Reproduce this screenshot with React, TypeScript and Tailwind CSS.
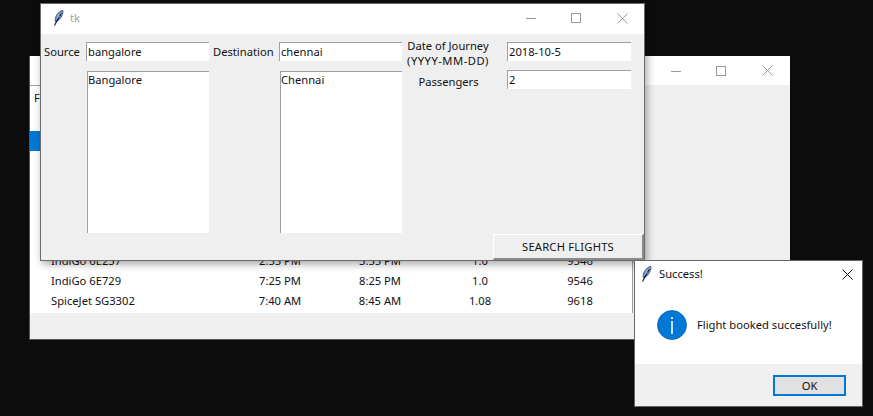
const font = { fontFamily: '"Noto Sans", "Open Sans", sans-serif' };

function Feather() {
  return (
    <svg width="11" height="16" viewBox="0 0 11 16">
      <path d="M9.8 0.3 C6.6 1 3 4.5 2.4 8.5 L2.2 11.5 C4.8 11.5 7.6 8.6 8.9 5.8 C9.8 3.8 10.2 1.8 9.8 0.3 Z" fill="#6f9fe0" stroke="#1c2b45" strokeWidth="0.7" />
      <path d="M8.3 3 L1.5 15.5" stroke="#0b0f1a" strokeWidth="1.1" fill="none" />
      <path d="M7.6 3.2 L4.8 5.6 M6.8 6.2 L4.2 7.8" stroke="#dbe9f9" strokeWidth="0.7" fill="none" />
    </svg>
  );
}

function WinControls({ color = '#999999' }: { color?: string }) {
  return (
    <div className="flex items-center">
      <svg width="10" height="10" viewBox="0 0 10 10" className="mr-[35px]">
        <path d="M0 5.5 H10" stroke={color} fill="none" />
      </svg>
      <svg width="10" height="10" viewBox="0 0 10 10" className="mr-[36px]">
        <rect x="0.5" y="0.5" width="9" height="9" stroke={color} fill="none" />
      </svg>
      <svg width="11" height="11" viewBox="0 0 11 11">
        <path d="M0.5 0.5 L10.5 10.5 M10.5 0.5 L0.5 10.5" stroke={color} fill="none" />
      </svg>
    </div>
  );
}

function Entry({ value, className }: { value: string; className: string }) {
  return (
    <div className={`h-[19px] bg-white border-t border-l border-[#a0a0a0] pl-[1px] leading-[17px] text-[11.2px] text-[#111] ${className}`}>
      {value}
    </div>
  );
}

function ListBox({ value, className }: { value: string; className: string }) {
  return (
    <div className={`h-[162px] bg-white border-t border-l border-[#a0a0a0] leading-[16px] text-[11.2px] text-[#111] ${className}`}>
      {value}
    </div>
  );
}

const flights = [
  ['IndiGo 6E237', '2:55 PM', '3:55 PM', '1.0', '9546'],
  ['IndiGo 6E729', '7:25 PM', '8:25 PM', '1.0', '9546'],
  ['SpiceJet SG3302', '7:40 AM', '8:45 AM', '1.08', '9618'],
];

function BackWindow() {
  return (
    <div className="absolute left-[29px] top-[56px] w-[761px] h-[284px] bg-[#f0f0f0] border-l border-b border-[#555] flex flex-col text-[11.2px]">
      <div className="h-[29px] bg-white flex items-center justify-end pr-[17px] shrink-0">
        <WinControls />
      </div>
      <div className="flex-1 flex flex-col">
        <div className="flex-1 w-[603px] bg-white border-r border-[#a0a0a0] border-t flex flex-col justify-end relative">
          <div className="absolute left-[4px] top-[4px] text-[#111]">F</div>
          <div className="absolute left-0 top-[45px] w-[20px] h-[20px] bg-[#0078d7]" />
          {flights.map((f) => (
            <div key={f[0]} className="h-[20px] flex items-center text-[#111] leading-[20px]">
              <div className="w-[200px] pl-[21px]">{f[0]}</div>
              <div className="w-[100px] text-center">{f[1]}</div>
              <div className="w-[100px] text-center">{f[2]}</div>
              <div className="w-[100px] text-center">{f[3]}</div>
              <div className="w-[100px] text-center">{f[4]}</div>
            </div>
          ))}
          <div className="h-[2px]" />
        </div>
        <div className="h-[26px] shrink-0" />
      </div>
    </div>
  );
}

function SearchWindow() {
  return (
    <div className="absolute left-[40px] top-[3px] w-[605px] h-[258px] bg-[#efefef] border border-[#6b6b6b] shadow-[2px_3px_8px_rgba(0,0,0,0.35)] flex flex-col text-[11.2px] text-[#111]">
      <div className="h-[30px] bg-white flex items-center justify-between pl-[12px] pr-[16px] pb-[2px] shrink-0">
        <div className="flex items-center gap-[6px]">
          <Feather />
          <span className="text-[#a3a3a3]">tk</span>
        </div>
        <WinControls />
      </div>
      <div className="flex-1 flex flex-col">
        <div className="flex pt-[8px]">
          <div className="w-[45px] pl-[3px] leading-[19px]">Source</div>
          <div className="w-[127px] flex flex-col">
            <Entry value="bangalore" className="w-[123px]" />
            <ListBox value="Bangalore" className="w-[122px] ml-[1px] mt-[10px]" />
          </div>
          <div className="w-[66px] leading-[19px]">Destination</div>
          <div className="w-[128px] flex flex-col">
            <Entry value="chennai" className="w-[123px]" />
            <ListBox value="Chennai" className="w-[122px] ml-[1px] mt-[10px]" />
          </div>
          <div className="w-[100px] flex flex-col whitespace-nowrap">
            <div className="text-center leading-[15px] pr-[18px] -mt-[4px]">
              Date of Journey
              <br />
              <span className="tracking-[0.5px]">(YYYY-MM-DD)</span>
            </div>
            <div className="text-center leading-[19px] mt-[4px] pr-[17px]">Passengers</div>
          </div>
          <div className="flex flex-col">
            <Entry value="2018-10-5" className="w-[124px]" />
            <Entry value="2" className="w-[124px] mt-[9px]" />
          </div>
        </div>
        <div className="flex justify-end mt-auto">
          <button className="w-[151px] h-[26px] bg-[#efefef] border-t border-l border-white border-r-2 border-b-2 border-r-[#8a8a8a] border-b-[#8a8a8a] text-center text-[11.2px] tracking-[0.2px] text-[#111] leading-[22px]">
            SEARCH FLIGHTS
          </button>
        </div>
      </div>
    </div>
  );
}

function SuccessDialog() {
  return (
    <div className="absolute left-[634px] top-[260px] w-[229px] h-[147px] bg-white border border-[#666] flex flex-col text-[11.2px] text-[#111]">
      <div className="h-[25px] mt-[1px] flex items-center justify-between pl-[6px] pr-[9px] shrink-0">
        <div className="flex items-center gap-[7px]">
          <Feather />
          <span>Success!</span>
        </div>
        <svg width="11" height="11" viewBox="0 0 11 11">
          <path d="M0.5 0.5 L10.5 10.5 M10.5 0.5 L0.5 10.5" stroke="#111" fill="none" />
        </svg>
      </div>
      <div className="h-[77px] flex items-start pl-[22px] pt-[23px] gap-[10px] shrink-0">
        <svg width="30" height="30" viewBox="0 0 30 30">
          <circle cx="15" cy="15" r="14.5" fill="#0078d7" stroke="#0a5ea8" strokeWidth="0.8" />
          <rect x="14.2" y="7" width="1.6" height="2" fill="#fff" />
          <rect x="14.2" y="11" width="1.6" height="13" fill="#fff" />
        </svg>
        <span className="leading-[30px]">Flight booked succesfully!</span>
      </div>
      <div className="flex-1 bg-[#f0f0f0] flex items-start justify-end pr-[16px] pt-[11px]">
        <button className="w-[73px] h-[21px] bg-[#e1e1e1] border-2 border-[#0078d7] text-center text-[11.2px] text-[#111] leading-[17px]">
          OK
        </button>
      </div>
    </div>
  );
}

export default function App() {
  return (
    <div className="relative w-[873px] h-[416px] bg-[#0c0c0c] overflow-hidden" style={font}>
      <BackWindow />
      <SearchWindow />
      <SuccessDialog />
    </div>
  );
}
